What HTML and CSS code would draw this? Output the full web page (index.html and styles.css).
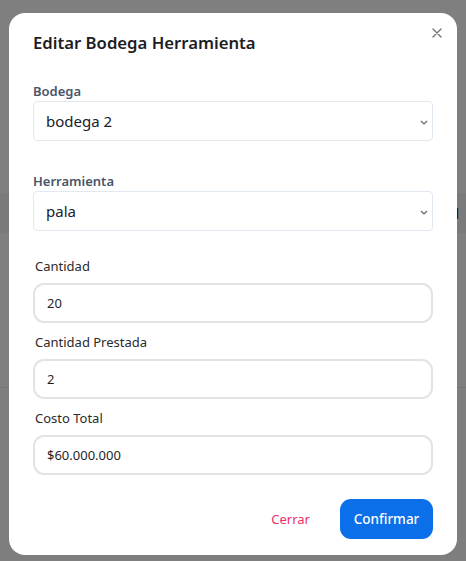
FILE: index.html
```html
<!DOCTYPE html>
<html lang="es">
<head>
<meta charset="utf-8">
<title>Editar Bodega Herramienta</title>
<link rel="stylesheet" href="styles.css">
</head>
<body>
<div class="page">
  <div class="page-spacer"></div>
  <div class="table-head"><span class="th-text">Cantidad</span></div>
  <div class="table-body"></div>
  <div class="table-row"></div>
</div>

<div class="overlay">
  <div class="modal">
    <button class="close" aria-label="Cerrar">
      <svg width="10" height="10" viewBox="0 0 10 10"><path d="M1 1 L9 9 M9 1 L1 9" stroke="#777" stroke-width="1.4" stroke-linecap="round"/></svg>
    </button>
    <h2 class="title">Editar Bodega Herramienta</h2>

    <div class="sel-group">
      <label class="sel-label">Bodega</label>
      <div class="sel-wrap">
        <select class="select"><option>bodega 2</option></select>
        <svg class="chev" width="8" height="5" viewBox="0 0 8 5"><path d="M1 1 L4 4 L7 1" fill="none" stroke="#666" stroke-width="1.2"/></svg>
      </div>
    </div>

    <div class="sel-group second">
      <label class="sel-label">Herramienta</label>
      <div class="sel-wrap">
        <select class="select"><option>pala</option></select>
        <svg class="chev" width="8" height="5" viewBox="0 0 8 5"><path d="M1 1 L4 4 L7 1" fill="none" stroke="#666" stroke-width="1.2"/></svg>
      </div>
    </div>

    <div class="field first">
      <label class="f-label">Cantidad</label>
      <input class="input" value="20">
    </div>
    <div class="field">
      <label class="f-label">Cantidad Prestada</label>
      <input class="input" value="2">
    </div>
    <div class="field">
      <label class="f-label">Costo Total</label>
      <input class="input" value="$60.000.000">
    </div>

    <div class="footer">
      <button class="btn-close">Cerrar</button>
      <button class="btn-confirm">Confirmar</button>
    </div>
  </div>
</div>
</body>
</html>
```

FILE: styles.css
```css
* { box-sizing: border-box; }
html, body { margin: 0; padding: 0; }
body {
  width: 466px;
  height: 561px;
  overflow: hidden;
  background: #ffffff;
  font-family: "Noto Sans", "Open Sans", sans-serif;
}
.page { width: 466px; }
.page-spacer { height: 193px; }
.table-head {
  height: 40px;
  background: #f4f4f4;
  display: flex;
  align-items: center;
  padding-left: 400px;
  white-space: nowrap;
  overflow: hidden;
}
.th-text { font-size: 14px; color: #222; }
.table-body { height: 155px; border-bottom: 1px solid #ececec; }
.table-row { height: 172px; background: #fdfdfd; }

.overlay {
  position: fixed;
  inset: 0;
  background: rgba(0, 0, 0, 0.5);
}
.modal {
  position: absolute;
  left: 9px;
  top: 13px;
  width: 448px;
  height: 542px;
  background: #fff;
  border-radius: 16px;
  padding: 16px 24px 0 24px;
}
.close {
  position: absolute;
  right: 10px;
  top: 10px;
  width: 20px;
  height: 20px;
  padding: 0;
  border: 0;
  background: transparent;
  display: flex;
  align-items: center;
  justify-content: center;
}
.title {
  margin: 0;
  font-size: 16.7px;
  line-height: 27px;
  font-weight: 600;
  color: #1d1d1f;
}
.sel-group { margin-top: 25px; }
.sel-group.second { margin-top: 30px; }
.sel-label {
  display: block;
  font-size: 13px;
  line-height: 20px;
  font-weight: 600;
  color: #4a5568;
}
.sel-wrap { position: relative; }
.select {
  display: block;
  width: 100%;
  height: 40px;
  border: 1px solid #e2e8f0;
  border-radius: 4px;
  background: #fff;
  -webkit-appearance: none;
  appearance: none;
  font-family: inherit;
  font-size: 15px;
  color: #1a202c;
  padding: 0 12px;
}
.chev { position: absolute; right: 5px; top: 19px; }

.field.first { margin-top: 25px; }
.field { margin-top: 9px; }
.f-label {
  display: block;
  padding-left: 2px;
  font-size: 13px;
  line-height: 20px;
  color: #2b2b2b;
  margin-bottom: 7px;
}
.input {
  display: block;
  width: 100%;
  height: 40px;
  border: 2px solid #e3e3e3;
  border-radius: 11px;
  background: #fff;
  font-family: inherit;
  font-size: 13px;
  color: #1f1f1f;
  padding: 0 12px;
  outline: none;
}
.footer {
  margin-top: 24px;
  display: flex;
  justify-content: flex-end;
  align-items: center;
  gap: 14px;
}
.btn-close {
  border: 0;
  background: transparent;
  font-family: inherit;
  font-size: 13px;
  color: #ea2f6c;
  padding: 0 16px;
  height: 40px;
}
.btn-confirm {
  border: 0;
  background: #0a6fe8;
  color: #fff;
  font-family: inherit;
  font-size: 13.5px;
  font-weight: 500;
  border-radius: 11px;
  height: 40px;
  width: 93px;
  padding: 0;
}
```
